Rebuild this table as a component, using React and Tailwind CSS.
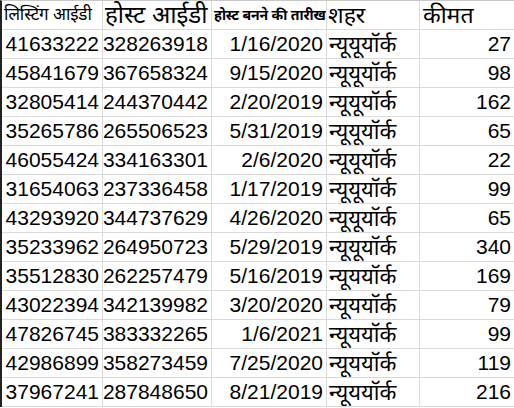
const rows = [
  ["41633222", "328263918", "1/16/2020", "न्यूयूयॉर्क", "27"],
  ["45841679", "367658324", "9/15/2020", "न्यूयूयॉर्क", "98"],
  ["32805414", "244370442", "2/20/2019", "न्यूयूयॉर्क", "162"],
  ["35265786", "265506523", "5/31/2019", "न्यूयूयॉर्क", "65"],
  ["46055424", "334163301", "2/6/2020", "न्यूयूयॉर्क", "22"],
  ["31654063", "237336458", "1/17/2019", "न्यूयूयॉर्क", "99"],
  ["43293920", "344737629", "4/26/2020", "न्यूयूयॉर्क", "65"],
  ["35233962", "264950723", "5/29/2019", "न्यूयूयॉर्क", "340"],
  ["35512830", "262257479", "5/16/2019", "न्यूययॉर्क", "169"],
  ["43022394", "342139982", "3/20/2020", "न्यूययॉर्क", "79"],
  ["47826745", "383332265", "1/6/2021", "न्यूययॉर्क", "99"],
  ["42986899", "358273459", "7/25/2020", "न्यूययॉर्क", "119"],
  ["37967241", "287848650", "8/21/2019", "न्यूययॉर्क", "216"],
];

const cell = "h-[29px] border-r border-b border-[#d9d9d9] flex items-center overflow-hidden whitespace-nowrap";

export default function App() {
  return (
    <div
      className="w-[514px] h-[408px] overflow-hidden bg-white text-black"
      style={{ fontFamily: '"Liberation Sans", "Noto Sans Devanagari", "Noto Sans", sans-serif' }}
    >
      <div className="grid grid-cols-[101px_109px_115px_93px_96px] border-l-2 border-l-[#222] border-t border-t-[#c8c8c8]">
        {/* Header */}
        <div className={`${cell} pl-[2px] text-[17px] tracking-[-0.2px]`}>लिस्टिंग आईडी</div>
        <div className={`${cell} px-[2px] text-[24px]`}>होस्ट आईडी</div>
        <div className={`${cell} px-[2px] text-[14px] font-bold tracking-[-0.2px]`}>होस्ट बनने की तारीख</div>
        <div className={`${cell} px-[1px] text-[23px]`}>शहर</div>
        <div className={`${cell} px-[3px] text-[23px]`}>कीमत</div>

        {rows.map((r) => (
          <Row key={r[0]} r={r} />
        ))}
      </div>
    </div>
  );
}

function Row({ r }) {
  return (
    <>
      <div className={`${cell} justify-end pr-[3px] text-[21px]`}>{r[0]}</div>
      <div className={`${cell} justify-end pr-[3px] text-[21px]`}>{r[1]}</div>
      <div className={`${cell} justify-end pr-[3px] text-[21px]`}>{r[2]}</div>
      <div className={`${cell} pl-[2px] text-[22px]`}>{r[3]}</div>
      <div className={`${cell} justify-end pr-[4px] text-[21px]`}>{r[4]}</div>
    </>
  );
}
